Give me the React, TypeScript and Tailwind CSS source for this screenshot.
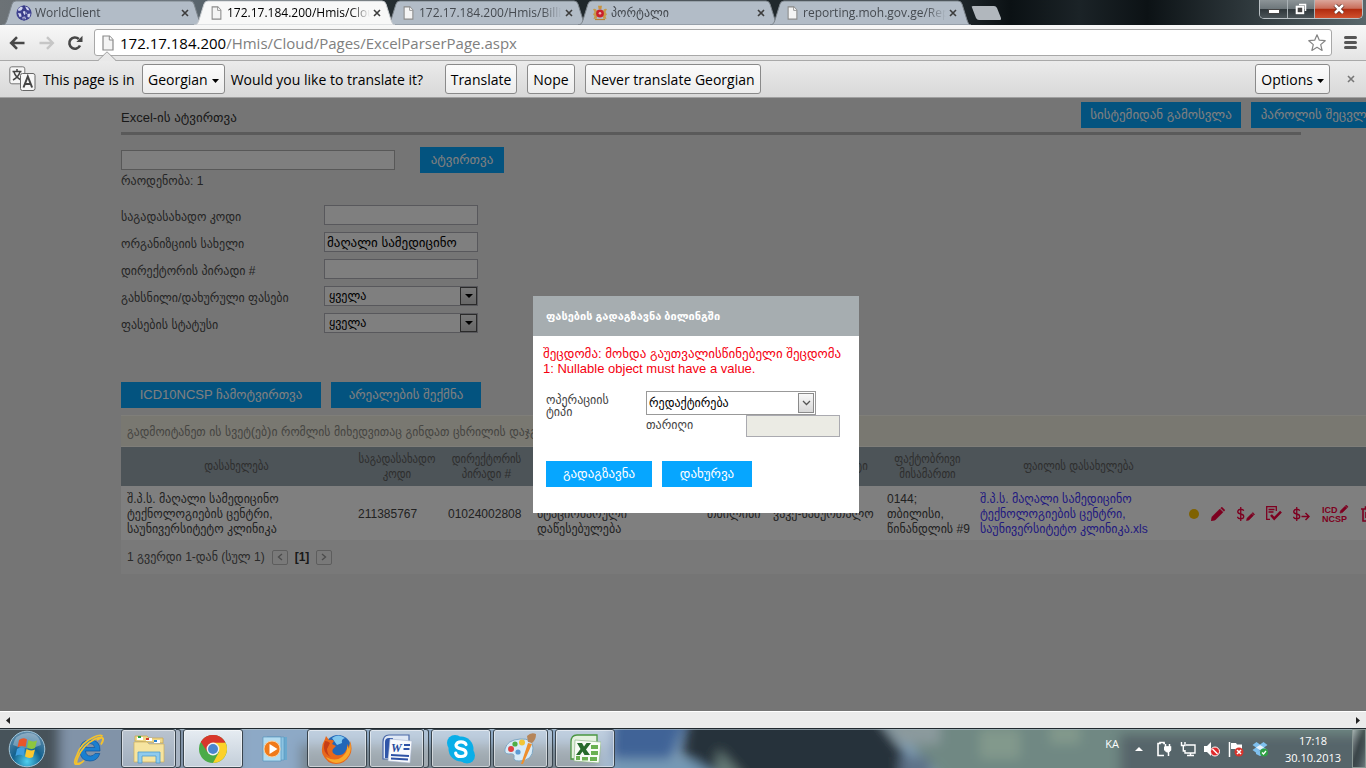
import type { ReactNode } from "react";

const GEO = "font-['Liberation_Sans','DejaVu_Sans',sans-serif]";

function PageIcon({ className }: { className?: string }) {
  return (
    <svg viewBox="0 0 12 16" className={className} aria-hidden="true">
      <path d="M1 1h6.5L11 4.8V15H1z" fill="#f4f4f4" stroke="#8a8a8a" strokeWidth="1.2" />
      <path d="M7.3 1v4H11" fill="#fff" stroke="#8a8a8a" strokeWidth="1" />
    </svg>
  );
}

function GlobeIcon() {
  return (
    <svg viewBox="0 0 16 16" className="h-4 w-4" aria-hidden="true">
      <circle cx="8" cy="8" r="7.600" fill="#3f4290" />
      <path d="M2 4l3-2.500L7.500 3 5 5.500 2.500 6zM9 1.500l3 1 1.500 3-2.500-.5zM6.500 6.500l3-.5 1.500 2.500-2.500 1.500zM2 8l3 .5.500 3-2 .5zM11.500 9l3-.5-1 4-2-.5zM6 12l3.500-.5L10 14l-3 .8z" fill="#d3d6ef" />
      <path d="M8 .5q-3.500 7.500 0 15M8 .5q3.500 7.500 0 15" stroke="#30337e" strokeWidth=".7" fill="none" />
    </svg>
  );
}

function CrestIcon() {
  return (
    <svg viewBox="0 0 16 16" className="h-4 w-4" aria-hidden="true">
      <path d="M6 .8h4L9.400 4H6.600z" fill="#c9933c" />
      <path d="M1 4q3-1 4 2v7.500l-3.500.5 1-3L1 9.500 2.500 7zM15 4q-3-1-4 2v7.500l3.500.5-1-3 1.500-1.500L13.500 7z" fill="#c79a4a" />
      <circle cx="8" cy="8.500" r="3.900" fill="#c9202b" />
      <circle cx="8" cy="8.300" r="1.300" fill="#e9b0b0" />
      <path d="M3 14.500h10" stroke="#b58236" strokeWidth="1.200" />
    </svg>
  );
}

function CloseX({ className = "text-[#3c3c3c]" }: { className?: string }) {
  return (
    <svg viewBox="0 0 8 8" className={`h-2 w-2 ${className}`} aria-hidden="true">
      <path d="M1 1l6 6M7 1L1 7" stroke="currentColor" strokeWidth="1.600" />
    </svg>
  );
}

function Tab({ icon, label, active = false }: { icon: ReactNode; label: string; active?: boolean }) {
  return (
    <div className={`relative -mr-[9px] h-[25px] w-[201px] shrink-0 ${active ? "z-10" : ""}`}>
      <svg viewBox="0 0 201 25" preserveAspectRatio="none" className="absolute inset-0 h-full w-full" aria-hidden="true">
        <path
          d="M0 25C3 25 4 23 5 20L10 4Q11 1 14 1H188Q191 1 192 4L197 20C198 23 199 25 201 25Z"
          fill={active ? "#f8f8f8" : "#b2bcc7"}
          stroke={active ? "#c8ccd0" : "#7d858c"}
          strokeWidth="1"
        />
      </svg>
      <div className="relative flex h-full items-center pr-[14px] pl-[14px]">
        <button type="button" className="flex min-w-0 flex-1 items-center gap-[3px] text-left">
          <span className="flex w-4 shrink-0 justify-center">{icon}</span>
          <span
            className={`w-[143px] overflow-hidden font-['Open_Sans','DejaVu_Sans',sans-serif] text-[12px] whitespace-nowrap [mask-image:linear-gradient(to_right,black_86%,transparent)] ${
              active ? "text-black" : "text-[#454a50]"
            }`}
          >
            {label}
          </span>
        </button>
        <button type="button" aria-label="Close tab" className="shrink-0">
          <CloseX />
        </button>
      </div>
    </div>
  );
}

function TitleBar() {
  return (
    <header className="flex h-[25px] shrink-0 bg-[linear-gradient(90deg,#6c7276_0%,#5b666e_14%,#20282c_30%,#20282c_70%,#0b1114_74%,#1b2327_79%,#0c1215_84%,#283135_90%,#59676b_100%)] pl-[2px]">
      <Tab icon={<GlobeIcon />} label="WorldClient" />
      <Tab icon={<PageIcon className="h-[14px] w-[11px]" />} label="172.17.184.200/Hmis/Clou" active />
      <Tab icon={<PageIcon className="h-[14px] w-[11px]" />} label="172.17.184.200/Hmis/Billin" />
      <Tab icon={<CrestIcon />} label="პორტალი" />
      <Tab icon={<PageIcon className="h-[14px] w-[11px]" />} label="reporting.moh.gov.ge/Rep" />
      <button type="button" aria-label="New tab" className="mt-[6px] ml-[9px] h-[14px] w-[31px] shrink-0">
        <svg viewBox="0 0 31 14" className="h-full w-full" aria-hidden="true">
          <path d="M1 1.500Q0 0 2 0H23Q25 0 26 2L30 12Q30.500 14 29 14H8Q6 14 5 12Z" fill="#b1b7bd" />
        </svg>
      </button>
      <div className="mr-[3px] ml-auto flex h-[19px] overflow-hidden rounded-b-[5px] border border-t-0 border-[#b9c0c4]">
        <button type="button" aria-label="Minimize" className="flex w-[28px] items-center justify-center border-r border-[#aab2b6] bg-[linear-gradient(#8c9497_0%,#6e777b_48%,#2f373b_52%,#4b5458_100%)]">
          <span className="mt-1 h-[5px] w-3 border border-[#444] bg-white" />
        </button>
        <button type="button" aria-label="Restore" className="flex w-[27px] items-center justify-center border-r border-[#aab2b6] bg-[linear-gradient(#8c9497_0%,#6e777b_48%,#2f373b_52%,#4b5458_100%)]">
          <svg viewBox="0 0 12 12" className="h-3 w-3" aria-hidden="true">
            <path d="M4 1.500h6.500v6.500" stroke="#fff" strokeWidth="1.500" fill="none" />
            <rect x="1.700" y="3.700" width="6.500" height="6.500" fill="#444" stroke="#fff" strokeWidth="2" />
          </svg>
        </button>
        <button type="button" aria-label="Close" className="flex w-[47px] items-center justify-center bg-[linear-gradient(#dba69b_0%,#c96e5b_46%,#b12c10_52%,#d0502e_100%)]">
          <svg viewBox="0 0 12 10" className="h-[10px] w-3" aria-hidden="true">
            <path d="M2 1l8 8M10 1L2 9" stroke="#5a2a22" strokeWidth="4" />
            <path d="M2 1l8 8M10 1L2 9" stroke="#fff" strokeWidth="2.500" />
          </svg>
        </button>
      </div>
    </header>
  );
}

function Toolbar() {
  return (
    <div className="relative flex h-[36px] shrink-0 items-center border-b border-[#a9a9a9] bg-linear-to-b from-[#f8f8f8] to-[#e4e4e4] pr-[7px] pl-[9px]">
      <button type="button" aria-label="Back" className="w-[18px]">
        <svg viewBox="0 0 16 14" className="h-[14px] w-4" fill="none" stroke="#474747" strokeWidth="2.600" aria-hidden="true">
          <path d="M15.500 7H2.500M8 1.200L2.200 7 8 12.800" />
        </svg>
      </button>
      <button type="button" aria-label="Forward" className="ml-[12px] w-[18px]">
        <svg viewBox="0 0 16 14" className="h-[14px] w-4" fill="none" stroke="#c6c6c6" strokeWidth="2.400" aria-hidden="true">
          <path d="M.5 7h13M8 1.200L13.800 7 8 12.800" />
        </svg>
      </button>
      <button type="button" aria-label="Reload" className="ml-[10px] w-[18px]">
        <svg viewBox="0 0 16 16" className="h-4 w-4" aria-hidden="true">
          <path d="M13 10.500A5.600 5.600 0 1 1 11.800 4" fill="none" stroke="#474747" strokeWidth="2.600" />
          <path d="M15.500.8v6.200H9.300z" fill="#474747" />
        </svg>
      </button>
      <div className="ml-[9px] flex h-[27px] min-w-0 flex-1 items-center rounded-[3px] border border-[#a8a8a8] bg-white pr-[4px] pl-[7px]">
        <PageIcon className="h-4 w-3 shrink-0" />
        <label className="relative ml-[6px] min-w-0 flex-1 font-['Open_Sans',sans-serif] text-[15px] leading-6">
          <span className="pointer-events-none absolute inset-0 truncate text-[#808080]">
            <span className="text-black">172.17.184.200</span>/Hmis/Cloud/Pages/ExcelParserPage.aspx
          </span>
          <input aria-label="Address" className="block h-6 w-full bg-transparent outline-none" />
        </label>
        <button type="button" aria-label="Bookmark">
          <svg viewBox="0 0 20 20" className="h-5 w-5" aria-hidden="true">
            <path d="M10 1.800l2.300 5.400 5.900.5-4.500 3.900 1.400 5.800-5.100-3.100-5.100 3.100 1.400-5.800L1.800 7.700l5.900-.5z" fill="#fff" stroke="#858585" strokeWidth="1.200" strokeLinejoin="round" />
          </svg>
        </button>
      </div>
      <button type="button" aria-label="Menu" className="ml-[12px] flex w-[15px] flex-col gap-[2px]">
        <span className="h-[3px] w-[13px] rounded-full bg-[#555]" />
        <span className="h-[3px] w-[13px] rounded-full bg-[#555]" />
        <span className="h-[3px] w-[13px] rounded-full bg-[#555]" />
      </button>
      <svg viewBox="0 0 18 10" className="absolute -bottom-px left-[98px] z-10 h-[10px] w-[18px]" aria-hidden="true">
        <path d="M0 10L9 1l9 9z" fill="#e9e9e9" />
        <path d="M0 9.500L9 .8l9 8.700" fill="none" stroke="#a0a0a0" />
      </svg>
    </div>
  );
}

function BarButton({ children, arrow = false }: { children: ReactNode; arrow?: boolean }) {
  return (
    <button type="button" className="flex h-[30px] shrink-0 items-center gap-1 rounded-[3px] border border-[#8a8a8a] bg-linear-to-b from-[#fcfcfc] to-[#ececec] px-[5px]">
      {children}
      {arrow && (
        <svg viewBox="0 0 7 4" className="mt-1 h-1 w-[7px]" aria-hidden="true">
          <path d="M0 0h7L3.500 4z" fill="#000" />
        </svg>
      )}
    </button>
  );
}

function TranslateBar() {
  return (
    <div className="flex h-[37px] shrink-0 items-center border-b border-[#a0a0a0] bg-linear-to-b from-[#ebebeb] to-[#d8d8d8] pr-[11px] pl-[9px] font-['Open_Sans',sans-serif] text-[14px] whitespace-nowrap text-black">
      <svg viewBox="0 0 27 26" className="h-[26px] w-[27px] shrink-0" aria-hidden="true">
        <rect x=".8" y=".8" width="15" height="17" rx="2" fill="#f6f6f6" stroke="#777" />
        <path d="M3.500 5.500h9M8 3v2.500M5 6q1.500 5 7 8M11 6q-1.500 5-7 8" stroke="#444" strokeWidth="1.500" fill="none" />
        <rect x="11.500" y="7.500" width="14.500" height="17" rx="2" fill="#f6f6f6" stroke="#666" />
        <path d="M14.500 21.500l4.300-11 4.300 11M16 18h5.600" stroke="#444" strokeWidth="2" fill="none" />
      </svg>
      <span className="ml-[7px] w-[99px]">This page is in</span>
      <BarButton arrow>Georgian</BarButton>
      <span className="mr-[16px] ml-[6px] w-[198px]">Would you like to translate it?</span>
      <div className="flex gap-[10px]">
        <BarButton>Translate</BarButton>
        <BarButton>Nope</BarButton>
        <BarButton>Never translate Georgian</BarButton>
      </div>
      <div className="ml-auto flex items-center gap-[17px]">
        <BarButton arrow>Options</BarButton>
        <button type="button" aria-label="Dismiss">
          <CloseX className="text-[#777]" />
        </button>
      </div>
    </div>
  );
}

function BlueButton({ children, className = "" }: { children: ReactNode; className?: string }) {
  return (
    <button type="button" className={`flex h-[26px] shrink-0 items-center justify-center bg-[#06a6ff] text-[13px] whitespace-nowrap text-white ${className}`}>
      {children}
    </button>
  );
}

function FilterInput({ id, label, value }: { id: string; label: string; value?: string }) {
  return (
    <div className="flex h-[27px] items-start">
      <label htmlFor={id} className="w-[203px] shrink-0 pt-1 leading-4">{label}</label>
      <input id={id} defaultValue={value} className="h-5 w-[154px] border border-[#b0b0b8] bg-white px-[2px] text-[13px] text-black" />
    </div>
  );
}

function FilterSelect({ id, label }: { id: string; label: string }) {
  return (
    <div className="flex h-[27px] items-start">
      <label htmlFor={id} className="w-[203px] shrink-0 pt-1 leading-4">{label}</label>
      <div className="relative h-5 w-[154px]">
        <select id={id} className="h-5 w-full appearance-none border border-[#b0b0b8] bg-white px-[4px] text-[12px] leading-[18px] text-black">
          <option>ყველა</option>
        </select>
        <span className="pointer-events-none absolute top-px right-px flex h-[18px] w-[17px] items-center justify-center border border-[#555] bg-linear-to-b from-[#f2f2f2] to-[#cfcfcf]">
          <svg viewBox="0 0 8 4" className="h-1 w-2" aria-hidden="true">
            <path d="M0 0h8L4 4z" fill="#000" />
          </svg>
        </span>
      </div>
    </div>
  );
}

const PENCIL = "M0 14l1-4.200L8.800 2l3.200 3.200L4.200 13zM9.700 1.100L10.800 0 14 3.200l-1.100 1.100z";
const DOLLAR = "M9 3.800Q8.500 2.200 5.500 2.200T2 4.500Q2 6.500 5.500 7T9 9.500Q9 11.800 5.500 11.800T1.800 9.800M5.500 0v14";

function RowActions() {
  return (
    <div className="flex items-center text-[#fa0040]">
      <span className="h-[10px] w-[10px] shrink-0 rounded-full bg-[#ffc400]" />
      <button type="button" aria-label="Edit" className="ml-[12px] shrink-0">
        <svg viewBox="0 0 14 14" className="h-[14px] w-[14px]" aria-hidden="true"><path d={PENCIL} fill="currentColor" stroke="currentColor" strokeWidth=".5" /></svg>
      </button>
      <button type="button" aria-label="Edit price" className="ml-[12px] shrink-0">
        <svg viewBox="0 0 18 14" className="h-[14px] w-[18px]" aria-hidden="true">
          <path d={DOLLAR} transform="translate(-1 0) scale(.86 1)" fill="none" stroke="currentColor" strokeWidth="1.500" />
          <path d={PENCIL} transform="translate(9.500 5.500) scale(.58)" fill="currentColor" stroke="currentColor" />
        </svg>
      </button>
      <button type="button" aria-label="Confirm" className="-mt-[2px] ml-[11px] shrink-0">
        <svg viewBox="0 0 16 15" className="h-[15px] w-4" fill="none" stroke="currentColor" aria-hidden="true">
          <path d="M4 13.400H.7V.7h9.600V5M2.500 3.500h6M2.500 6h5" strokeWidth="1.300" />
          <path d="M5 9l3.200 3.600L15 5.600" strokeWidth="2.500" />
        </svg>
      </button>
      <button type="button" aria-label="Send price" className="ml-[11px] shrink-0">
        <svg viewBox="0 0 17 14" className="h-[14px] w-[17px]" fill="none" stroke="currentColor" aria-hidden="true">
          <path d={DOLLAR} transform="translate(-1 0) scale(.86 1)" strokeWidth="1.500" />
          <path d="M8.500 9.500h7M12.500 6l3.500 3.500-3.500 3.500" strokeWidth="1.500" />
        </svg>
      </button>
      <button type="button" aria-label="ICD NCSP" className="ml-[12px] shrink-0">
        <svg viewBox="0 0 27 18" className="h-[18px] w-[27px]" fill="currentColor" aria-hidden="true">
          <text x="0" y="8" fontSize="9" fontWeight="bold">ICD</text>
          <text x="0" y="17" fontSize="9" fontWeight="bold">NCSP</text>
          <path d={PENCIL} transform="translate(18 0) scale(.58)" stroke="currentColor" />
        </svg>
      </button>
      <button type="button" aria-label="Delete" className="ml-[12px] shrink-0">
        <svg viewBox="0 0 13 16" className="h-4 w-[13px]" fill="none" stroke="currentColor" strokeWidth="1.600" aria-hidden="true">
          <path d="M0 3h13M2 3v12h9V3M4.500 3V1h4v2M5 6v6M8 6v6" />
        </svg>
      </button>
    </div>
  );
}

function PagerButton({ d, label }: { d: string; label: string }) {
  return (
    <button type="button" aria-label={label} className="flex h-[15px] w-4 items-center justify-center rounded-[2px] border border-[#bbb]">
      <svg viewBox="0 0 6 8" className="h-2 w-[6px]" aria-hidden="true">
        <path d={d} fill="none" stroke="#999" strokeWidth="1.400" />
      </svg>
    </button>
  );
}

function PriceTable() {
  return (
    <section className="mt-[7px] w-[1300px] bg-[#f3f3f3]">
      <p className="h-[32px] border-y border-[#fffdf2] bg-[#f3f0e2] px-[6px] font-['Liberation_Sans','DejaVu_Sans_Condensed','DejaVu_Sans',sans-serif] text-[13px] leading-[31px] text-[#8a8a84]">
        გადმოიტანეთ ის სვეტ(ებ)ი რომლის მიხედვითაც გინდათ ცხრილის დაჯგუფება
      </p>
      <table className="w-full table-fixed border-collapse leading-[15px]">
        <colgroup>
          <col className="w-[231px]" />
          <col className="w-[90px]" />
          <col className="w-[89px]" />
          <col className="w-[170px]" />
          <col className="w-[66px]" />
          <col className="w-[114px]" />
          <col className="w-[93px]" />
          <col className="w-[209px]" />
          <col />
        </colgroup>
        <thead className="font-['Liberation_Sans','DejaVu_Sans_Condensed','DejaVu_Sans',sans-serif]">
          <tr className="h-[39px] bg-[#9ba8b0] text-[#5c5c5c] [&>th]:p-0 [&>th]:font-normal">
            <th>დასახელება</th>
            <th>საგადასახადო<br />კოდი</th>
            <th>დირექტორის<br />პირადი #</th>
            <th />
            <th />
            <th>მუნიციპალიტეტი</th>
            <th>ფაქტობრივი<br />მისამართი</th>
            <th>ფაილის დასახელება</th>
            <th />
          </tr>
        </thead>
        <tbody>
          <tr className="h-[54px] bg-white text-[#444] [&>td]:pt-[2px] [&>td]:pb-0 [&>td]:pl-[6px]">
            <td>შ.პ.ს. მაღალი სამედიცინო<br />ტექნოლოგიების ცენტრი,<br />საუნივერსიტეტო კლინიკა</td>
            <td>211385767</td>
            <td>01024002808</td>
            <td><br />სტაციონარული<br />დაწესებულება</td>
            <td className="whitespace-nowrap">თბილისი</td>
            <td className="whitespace-nowrap">ვაკე-საბურთალო</td>
            <td className="whitespace-nowrap">0144;<br />თბილისი,<br />წინანდლის #9</td>
            <td className="whitespace-nowrap">
              <a href="#file" className="text-[#4334ff]">
                შ.პ.ს. მაღალი სამედიცინო<br />ტექნოლოგიების ცენტრი,<br />საუნივერსიტეტო კლინიკა.xls
              </a>
            </td>
            <td><RowActions /></td>
          </tr>
        </tbody>
      </table>
      <div className="flex h-[34px] items-center gap-[7px] px-[6px] text-[#555]">
        <span>1 გვერდი 1-დან (სულ 1)</span>
        <PagerButton label="Previous page" d="M5 1L1.500 4 5 7" />
        <b className="text-[#333]">[1]</b>
        <PagerButton label="Next page" d="M1 1l3.500 3L1 7" />
      </div>
    </section>
  );
}

function Dialog() {
  return (
    <div role="dialog" aria-labelledby="dialog-title" className="w-[326px] bg-white pb-[26px] text-[#444]">
      <h2 id="dialog-title" className="flex h-10 items-center bg-[#a6adb0] px-[13px] text-[11px] font-bold text-white">
        ფასების გადაგზავნა ბილინგში
      </h2>
      <p className="mt-[10px] px-[10px] text-[13px] leading-[15px] whitespace-nowrap text-[#f50010]">
        შეცდომა: მოხდა გაუთვალისწინებელი შეცდომა<br />1: Nullable object must have a value.
      </p>
      <div className="mt-[15px] flex h-[24px] items-start px-[13px]">
        <label htmlFor="operation" className="w-[100px] pt-[3px] text-[12px] leading-3">ოპერაციის<br />ტიპი</label>
        <div className="relative h-[24px] w-[170px]">
          <select id="operation" className="h-[24px] w-full appearance-none border border-[#999] bg-white px-[2px] text-[12px] text-black">
            <option>რედაქტირება</option>
          </select>
          <span className="pointer-events-none absolute top-[2px] right-[2px] flex h-5 w-4 items-center justify-center border border-[#8a8a8a] bg-linear-to-b from-[#f8f8f8] to-[#d8d8d8]">
            <svg viewBox="0 0 9 6" className="h-[6px] w-[9px]" aria-hidden="true">
              <path d="M1 1l3.500 3.500L8 1" fill="none" stroke="#555" strokeWidth="1.300" />
            </svg>
          </span>
        </div>
      </div>
      <div className="flex pl-[113px]">
        <label htmlFor="date" className="w-[100px] pt-[2px] text-[12px] leading-4">თარიღი</label>
        <input id="date" disabled className="h-[22px] w-[94px] border border-[#aaaab0] bg-[#ebebe4]" />
      </div>
      <div className="mt-[24px] flex gap-[10px] px-[13px]">
        <BlueButton className="w-[106px]">გადაგზავნა</BlueButton>
        <BlueButton className="w-[90px]">დახურვა</BlueButton>
      </div>
    </div>
  );
}

function HmisPage() {
  return (
    <main className={`relative min-h-0 flex-1 overflow-hidden bg-[#ebebeb] text-[12px] text-[#4a4a4a] ${GEO}`}>
      <div className="pl-[121px]">
        <div className="flex pt-1">
          <h1 className="w-[960px] shrink-0 pt-[6px] text-[13px] leading-5 text-[#333]">Excel-ის ატვირთვა</h1>
          <div className="flex gap-[10px]">
            <BlueButton className="w-[160px]">სისტემიდან გამოსვლა</BlueButton>
            <BlueButton className="w-[132px]">პაროლის შეცვლა</BlueButton>
          </div>
        </div>
        <div className="mt-1 mr-[65px] h-[3px] bg-[#b4b4b4]" />
        <div className="mt-[12px] flex items-center gap-[25px]">
          <input aria-label="Excel" className="h-5 w-[274px] border border-[#b0b0b0] bg-white px-1" />
          <BlueButton className="w-[84px]">ატვირთვა</BlueButton>
        </div>
        <p className="leading-4">რაოდენობა: 1</p>
        <form className="mt-4">
          <FilterInput id="tax" label="საგადასახადო კოდი" />
          <FilterInput id="org" label="ორგანიზციის სახელი" value="მაღალი სამედიცინო" />
          <FilterInput id="director" label="დირექტორის პირადი #" />
          <FilterSelect id="prices" label="გახსნილი/დახურული ფასები" />
          <FilterSelect id="status" label="ფასების სტატუსი" />
        </form>
        <div className="mt-[42px] flex gap-[10px]">
          <BlueButton className="w-[200px]">ICD10NCSP ჩამოტვირთვა</BlueButton>
          <BlueButton className="w-[150px]">არეალების შექმნა</BlueButton>
        </div>
        <PriceTable />
      </div>
      <div className="absolute inset-0 flex items-center justify-center bg-black/50 pl-[26px]">
        <Dialog />
      </div>
    </main>
  );
}

function Scrollbar() {
  return (
    <div className="flex h-[17px] shrink-0 items-center justify-between border-t border-white bg-[#ebebeb] px-[6px]">
      <svg viewBox="0 0 4 7" className="h-[7px] w-1" aria-hidden="true"><path d="M4 0v7L0 3.500z" fill="#222" /></svg>
      <svg viewBox="0 0 4 7" className="h-[7px] w-1" aria-hidden="true"><path d="M0 0v7l4-3.500z" fill="#222" /></svg>
    </div>
  );
}

function AppButton({ label, children, open = false, active = false, stacked = false }: { label: string; children: ReactNode; open?: boolean; active?: boolean; stacked?: boolean }) {
  return (
    <button type="button" aria-label={label} className="flex h-[39px] w-[60px] shrink-0">
      <span
        className={`flex h-full flex-1 items-center justify-center rounded-[3px] border ${
          active
            ? "border-[#39444d] bg-linear-to-b from-[#e6ecf2] to-[#c3ced9] ring-1 ring-white/50 ring-inset"
            : open
              ? "border-[#39444d] bg-linear-to-b from-white/45 to-white/25 ring-1 ring-white/50 ring-inset"
              : "border-transparent"
        }`}
      >
        {children}
      </span>
      {stacked && <span className="h-full w-[5px] rounded-r-[3px] border border-l-0 border-[#39444d] bg-white/30" />}
    </button>
  );
}

const ICON = "h-8 w-8";

function StartIcon() {
  return (
    <svg viewBox="0 0 38 38" className="h-[38px] w-[38px]" aria-hidden="true">
      <defs>
        <radialGradient id="orb" cx="50%" cy="85%" r="80%">
          <stop offset="0" stopColor="#4fd0f0" />
          <stop offset=".5" stopColor="#14628f" />
          <stop offset="1" stopColor="#5c89a8" />
        </radialGradient>
      </defs>
      <circle cx="19" cy="19" r="17.800" fill="url(#orb)" stroke="#9fc4d8" />
      <path d="M5 15Q7 4 19 3t14 12Q19 22 5 15z" fill="#fff" opacity=".3" />
      <path d="M11 10q4-3 8-.5L17.500 17q-4-2-8 .5z" fill="#e8562a" />
      <path d="M20.500 10q4 2.500 8.500.5L27 18q-4 2-8-.5z" fill="#8dc63f" />
      <path d="M9 19q4-2.500 8-.5L15.500 26q-4-2.500-8 0z" fill="#3f9fe0" />
      <path d="M18.500 19q4 2.500 8.500.5L25 27q-4 2-8-.5z" fill="#fcc82f" />
    </svg>
  );
}

function IeIcon() {
  return (
    <svg viewBox="0 0 32 32" className={ICON} aria-hidden="true">
      <path d="M27 18H12.500q.5 5 5 5 3 0 4.500-2.500h4.800Q24.500 28 17 28 7 28 7 17.500T17 7q10.500 0 10 11zM12.500 14.500h9.200q-.5-4-4.500-4t-4.700 4z" fill="#1a7fd0" stroke="#0f559c" strokeWidth=".7" />
      <path d="M24 7q5-3.500 6-1.500t-2 6q3-6 1.200-7T22 6Q10 12 5 24q-3 7 0 6.500 3 0 6-3-5 5-8 4T4 22Q8 10 20 4.500q7-3.500 9.500-1.500" fill="none" stroke="#f2c12e" strokeWidth="1.700" />
    </svg>
  );
}

function FolderIcon() {
  return (
    <svg viewBox="0 0 34 30" className="h-[30px] w-[34px]" aria-hidden="true">
      <path d="M3 7V2h12l2 2h14v5z" fill="#f0d98a" stroke="#c9a84a" strokeWidth=".7" />
      <path d="M5 3h6v3H5zM14 4h6v3h-6zM22 6h6v3h-6z" fill="#fff" />
      <path d="M6 2h3v2H6z" fill="#25a03c" /><path d="M14 4h3v2h-3z" fill="#d53b2d" /><path d="M22 6h3v2h-3z" fill="#2c82d0" />
      <path d="M2 8h13l2 2h15v18H2z" fill="#f6e4a0" stroke="#cdb059" strokeWidth=".7" />
      <path d="M6 29V18h22v11h-4v-7H10v7z" fill="#8fcbee" stroke="#4d99cc" strokeWidth=".8" />
    </svg>
  );
}

function ChromeIcon() {
  return (
    <svg viewBox="0 0 32 32" className={ICON} aria-hidden="true">
      <circle cx="16" cy="16" r="14" fill="#4bab48" />
      <path d="M16 16L3.900 9A14 14 0 0 1 28.100 9z" fill="#d8372c" />
      <path d="M16 9.500h12.400A14 14 0 0 1 16 30l6-11z" fill="#fcd12a" />
      <path d="M3.900 9L10.400 19 16 9.500h12.400A14 14 0 0 0 3.900 9z" fill="#d8372c" />
      <circle cx="16" cy="16" r="6.400" fill="#f3f3f3" />
      <circle cx="16" cy="16" r="5" fill="#4a86cf" />
    </svg>
  );
}

function MediaIcon() {
  return (
    <svg viewBox="0 0 28 26" className="h-[26px] w-7" aria-hidden="true">
      <path d="M9 1h17v23H9z" fill="#69a9cf" /><path d="M6 1h17v23H6z" fill="#8cc4e2" stroke="#5796bd" strokeWidth=".6" />
      <path d="M2 1h18v24H2z" fill="#b4dcf0" stroke="#5796bd" strokeWidth=".7" />
      <circle cx="11" cy="13" r="8" fill="#f07a1a" stroke="#fbd0a0" />
      <path d="M8.500 8l8 5-8 5z" fill="#fff" />
    </svg>
  );
}

function FirefoxIcon() {
  return (
    <svg viewBox="0 0 32 32" className={ICON} aria-hidden="true">
      <circle cx="17" cy="15" r="13" fill="#2267b8" />
      <path d="M11 5q6-5 13 0-4 1-3 5l-5 2z" fill="#7fc6ee" />
      <path d="M29 8q3 8 0 14-5 9-14 9T1.500 21Q-.5 13 4 6l1-3 3 4q3-1 5 1l-2 3 4 2-3 3q-2 4 3 6 6 1 9-3 3-4 2-8 2 2 2 4 1-3 1-7z" fill="#e8681b" />
      <path d="M29 9q2 7-1 13-5 8-13 8-7-1-10-6 9 5 16 0 6-5 5-11 1 1 2 3z" fill="#f8a92b" />
      <path d="M4 8q3 0 5 2l-3 6q0 5 4 8Q0 19 4 8z" fill="#c63d16" />
    </svg>
  );
}

function WordIcon() {
  return (
    <svg viewBox="0 0 32 32" className={ICON} aria-hidden="true">
      <path d="M8 2h20v24H2V9q0-7 6-7z" fill="#dfe8f5" stroke="#4a68a8" strokeWidth="1.200" />
      <path d="M8 5h4L7 25H4V9q0-4 4-4z" fill="#2f55a8" />
      <path d="M9 6l22 2-2 22-22-2z" fill="#f8fafd" stroke="#a6b4cf" strokeWidth=".6" />
      <text x="10" y="19" fontSize="12" fontWeight="bold" fontStyle="italic" fill="#24489c" fontFamily="Liberation Serif">W</text>
      <path d="M23 12h6M22.500 16h6M10 22l18 1M10 25.500l17 1" stroke="#2d52a5" strokeWidth="1.800" />
    </svg>
  );
}

function SkypeIcon() {
  return (
    <svg viewBox="0 0 32 32" className={ICON} aria-hidden="true">
      <circle cx="16" cy="16" r="12.500" fill="#0aaee8" /><circle cx="10" cy="10" r="8" fill="#0aaee8" /><circle cx="22" cy="22.500" r="8" fill="#0aaee8" />
      <path d="M21 11.500Q20 8.800 16 8.800T11 12q0 3 5 3.800T21 20q0 3.500-5 3.500T10.700 20" fill="none" stroke="#fff" strokeWidth="3.200" strokeLinecap="round" />
    </svg>
  );
}

function PaintIcon() {
  return (
    <svg viewBox="0 0 34 32" className="h-8 w-[34px]" aria-hidden="true">
      <path d="M16 6q13-1 13 9 0 13-14 13-6 0-5-4t-5-3q-5 0-4-5Q3 7 16 6z" fill="#d8ebf7" stroke="#7da7c4" />
      <circle cx="7" cy="16" r="3" fill="#e04444" /><circle cx="11" cy="11" r="2.600" fill="#4fae48" /><circle cx="18" cy="9.500" r="3" fill="#f2c636" /><circle cx="14" cy="19" r="2.600" fill="#5c9bd4" />
      <path d="M24 10l4 1-9 20-2 0z" fill="#ee8f2c" />
      <path d="M23 3q4-4 9-2 0 6-4 9l-4-1z" fill="#b5855a" />
    </svg>
  );
}

function ExcelIcon() {
  return (
    <svg viewBox="0 0 32 32" className={ICON} aria-hidden="true">
      <path d="M8 2h20v24H2V9q0-7 6-7z" fill="#e4f1df" stroke="#4a9640" strokeWidth="1.300" />
      <path d="M6 7l26 2-2 21-25-2z" fill="#f8fcf6" stroke="#8fb888" strokeWidth=".7" />
      <path d="M22 12h7v4h-7zM22 18h7v4h-7zM21 24h7v4h-7zM13 24h6v3.500h-6zM7 23h4v4H7z" fill="#6ab151" />
      <path d="M8 10h5l2 3.500 2.500-3.500H22l-5 6.500L21 22h-5.500l-2-3.500L11 22H7l4.500-6z" fill="#276b2b" />
    </svg>
  );
}

function Tray() {
  return (
    <div className="relative ml-auto flex items-center font-['Open_Sans',sans-serif] text-[12px] text-white">
      <span className="-mt-2 text-[11px]">KA</span>
      <svg viewBox="0 0 8 4" className="ml-4 h-1 w-2" aria-hidden="true"><path d="M0 4h8L4 0z" fill="#fff" /></svg>
      <div className="ml-[13px] flex items-center gap-[8px]">
        <svg viewBox="0 0 16 16" className="h-4 w-4" fill="none" stroke="#fff" aria-hidden="true">
          <path d="M8 14.500H2V2.500h2v-1h4v1h1" strokeWidth="1.600" />
          <path d="M8.500 6h6v3l-2 2v4M9.500 3v3M13.500 3v3" strokeWidth="1.500" />
          <path d="M8.500 6h6v3l-2 2h-2l-2-2z" fill="#fff" />
        </svg>
        <svg viewBox="0 0 16 16" className="h-4 w-4" fill="none" stroke="#fff" strokeWidth="1.400" aria-hidden="true">
          <path d="M6 4h9v8H5V9M7 14.500h7M10.500 12v2.500M1.500 1v3.500h3.500V1M3.300 4.500V10H5" />
        </svg>
        <svg viewBox="0 0 16 16" className="h-4 w-4" aria-hidden="true">
          <path d="M0 5h3l4-4v14l-4-4H0z" fill="#fff" />
          <circle cx="11" cy="10.500" r="4.500" fill="#e0282a" stroke="#fff" /><path d="M8.500 8l5 5" stroke="#fff" strokeWidth="1.400" />
        </svg>
        <svg viewBox="0 0 16 16" className="h-4 w-4" aria-hidden="true">
          <path d="M1.500 1v15" stroke="#fff" strokeWidth="1.500" /><path d="M3 2h5l1 1.500h5V9H8L7 8H3z" fill="#fff" />
          <circle cx="11" cy="11" r="4.500" fill="#d8342c" /><path d="M9 9l4 4M13 9l-4 4" stroke="#fff" strokeWidth="1.500" />
        </svg>
        <svg viewBox="0 0 16 16" className="h-4 w-4" aria-hidden="true">
          <path d="M4.500 1L8 3.500 11.500 1 15.500 4 12 6.500 15.500 9 11.500 12 8 9.200 4.500 12 .5 9 4 6.500.5 4zM4 11.800l4-2 4 2V13l-4 2-4-2z" fill="#7fc0ee" />
          <path d="M8 4l4 2.500L8 9 4 6.500z" fill="#e6f4fd" />
          <circle cx="12" cy="11.500" r="4" fill="#2fa043" /><path d="M10 11.500l1.500 1.500 2.500-3" stroke="#fff" strokeWidth="1.300" fill="none" />
        </svg>
      </div>
      <div className="ml-[17px] w-[56px] text-center text-[11px] leading-[17px] whitespace-nowrap">17:18<br />30.10.2013</div>
      <button type="button" aria-label="Show desktop" className="ml-[11px] h-[39px] w-[14px] border border-[#8a9895] bg-linear-to-br from-white/40 via-black/30 to-white/10" />
    </div>
  );
}

function Taskbar() {
  return (
    <footer className="relative flex h-10 shrink-0 items-end overflow-hidden border-t border-[#20282e] bg-[#7d9bb5]">
      <svg viewBox="0 0 1366 39" preserveAspectRatio="none" className="absolute inset-0 h-full w-full" aria-hidden="true">
        <defs>
          <filter id="soft" x="-20%" y="-50%" width="140%" height="200%"><feGaussianBlur stdDeviation="6" /></filter>
        </defs>
        <g filter="url(#soft)">
          <path d="M-30-20H60V60H-30z" fill="#46525a" />
          <path d="M60-20H250V60H60z" fill="#8193a8" />
          <path d="M240-20H620V60H240z" fill="#8da9c6" />
          <path d="M300 15H600V60H300z" fill="#77858f" />
          <path d="M612-20H690L670 30H610z" fill="#3f6497" />
          <path d="M610 32H720V60H610z" fill="#7599b5" />
          <path d="M690-20H870L930 60H740L682 25z" fill="#25313b" />
          <path d="M718 20L745 50H715z" fill="#667b78" />
          <path d="M875-20H1400V60H950L925 30z" fill="#6f8883" />
          <path d="M880-10h60v25h-40z" fill="#8b9a9d" />
          <path d="M900 28h30v30h-30z" fill="#5d7288" />
          <path d="M980 0h40v30h-40zM1050-5h30v20h-30z" fill="#82998c" />
          <path d="M1120 5H1370V60H1120z" fill="#56656a" />
        </g>
        <path d="M0 .5H1366" stroke="#b5c5ce" opacity=".6" />
      </svg>
      <nav className="relative flex gap-[2px]">
        <button type="button" aria-label="Start" className="flex h-[39px] w-[57px] items-center justify-end pr-[11px]"><StartIcon /></button>
        <AppButton label="Internet Explorer"><IeIcon /></AppButton>
        <AppButton label="Explorer" open stacked><FolderIcon /></AppButton>
        <AppButton label="Chrome" active><ChromeIcon /></AppButton>
        <AppButton label="Media Player"><MediaIcon /></AppButton>
        <AppButton label="Firefox" open><FirefoxIcon /></AppButton>
        <AppButton label="Word" open stacked><WordIcon /></AppButton>
        <AppButton label="Skype" open><SkypeIcon /></AppButton>
        <AppButton label="Paint" open stacked><PaintIcon /></AppButton>
        <AppButton label="Excel" open><ExcelIcon /></AppButton>
      </nav>
      <Tray />
    </footer>
  );
}

export default function App() {
  return (
    <div className="flex h-screen flex-col overflow-hidden">
      <TitleBar />
      <Toolbar />
      <TranslateBar />
      <HmisPage />
      <Scrollbar />
      <Taskbar />
    </div>
  );
}
